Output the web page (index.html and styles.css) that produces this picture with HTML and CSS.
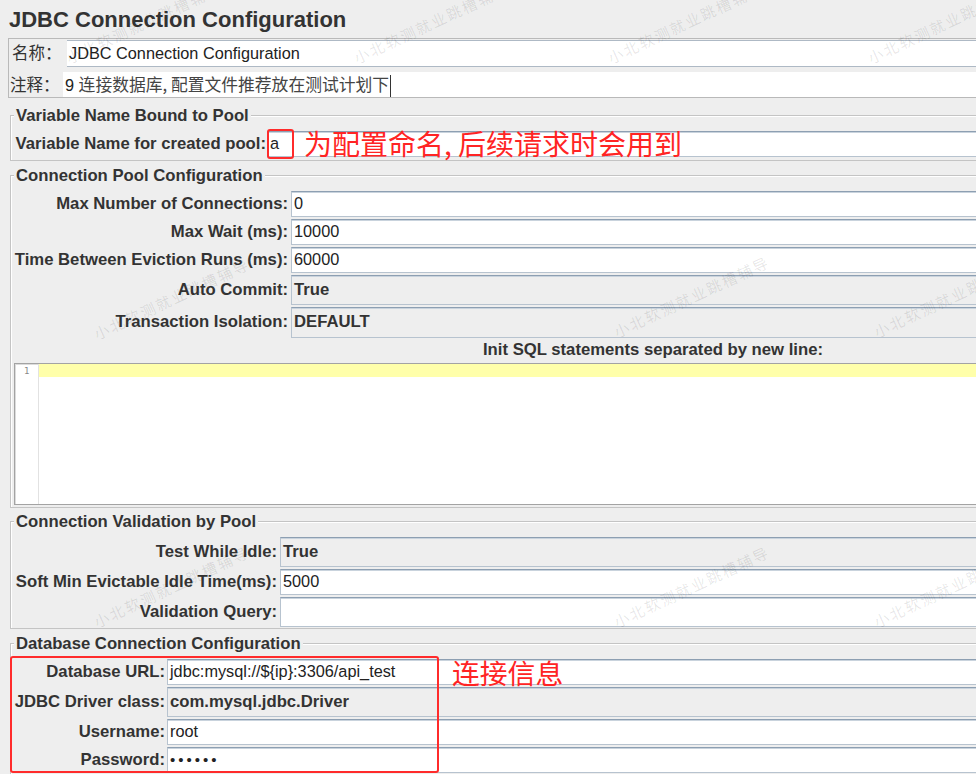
FILE: index.html
```html
<!DOCTYPE html>
<html lang="zh-CN">
<head>
<meta charset="utf-8">
<title>JDBC Connection Configuration</title>
<link rel="stylesheet" href="styles.css">
</head>
<body>
<div class="page">
  <h1 class="title">JDBC Connection Configuration</h1>

  <div class="name-panel">
    <div class="np-row name-row">
      <span class="np-label">名称：</span>
      <div class="np-field name-field">JDBC Connection Configuration</div>
    </div>
    <div class="np-row comment-row">
      <span class="np-label">注释：</span>
      <div class="np-field comment-field"><span class="num">9&nbsp;</span>连接数据库, 配置文件推荐放在测试计划下<span class="caret"></span></div>
    </div>
  </div>

  <section class="group g1">
    <div class="legend">Variable Name Bound to Pool</div>
    <div class="form f1">
      <label class="lbl">Variable Name for created pool:</label>
      <div class="field">a</div>
    </div>
  </section>

  <section class="group g2">
    <div class="legend">Connection Pool Configuration</div>
    <div class="form f2">
      <label class="lbl">Max Number of Connections:</label>
      <div class="field">0</div>
      <label class="lbl">Max Wait (ms):</label>
      <div class="field">10000</div>
      <label class="lbl">Time Between Eviction Runs (ms):</label>
      <div class="field">60000</div>
      <label class="lbl">Auto Commit:</label>
      <div class="field combo">True</div>
      <label class="lbl">Transaction Isolation:</label>
      <div class="field combo tall">DEFAULT</div>
    </div>
    <div class="sql-label">Init SQL statements separated by new line:</div>
    <div class="editor">
      <div class="gutter"><span class="ln">1</span></div>
      <div class="code"><div class="cur-line"></div></div>
    </div>
  </section>

  <section class="group g3">
    <div class="legend">Connection Validation by Pool</div>
    <div class="form f3">
      <label class="lbl">Test While Idle:</label>
      <div class="field combo">True</div>
      <label class="lbl">Soft Min Evictable Idle Time(ms):</label>
      <div class="field">5000</div>
      <label class="lbl">Validation Query:</label>
      <div class="field combo-h"></div>
    </div>
  </section>

  <section class="group g4">
    <div class="legend">Database Connection Configuration</div>
    <div class="form f4">
      <label class="lbl">Database URL:</label>
      <div class="field">jdbc:mysql://${ip}:3306/api_test</div>
      <label class="lbl">JDBC Driver class:</label>
      <div class="field combo">com.mysql.jdbc.Driver</div>
      <label class="lbl">Username:</label>
      <div class="field">root</div>
      <label class="lbl">Password:</label>
      <div class="field pwd">••••••</div>
    </div>
  </section>

  <div class="mark mark-a"></div>
  <div class="note note-a">为配置命名, 后续请求时会用到</div>
  <div class="mark mark-db"></div>
  <div class="note note-db">连接信息</div>

  <div class="wm wm1">小北软测就业跳槽辅导</div>
  <div class="wm wm2">小北软测就业跳槽辅导</div>
  <div class="wm wm3">小北软测就业跳槽辅导</div>
  <div class="wm wm4">小北软测就业跳槽辅导</div>
  <div class="wm wm5">小北软测就业跳槽辅导</div>
  <div class="wm wm6">小北软测就业跳槽辅导</div>
  <div class="wm wm7">小北软测就业跳槽辅导</div>
  <div class="wm wm8">小北软测就业跳槽辅导</div>
  <div class="wm wm9">小北软测就业跳槽辅导</div>
  <div class="wm wm10">小北软测就业跳槽辅导</div>
</div>
</body>
</html>
```

FILE: styles.css
```css
html, body {
  margin: 0;
  padding: 0;
  background: #eeeeee;
  overflow: hidden;
}
body {
  font-family: "Liberation Sans", Arial, "Noto Sans CJK SC", sans-serif;
  color: #333333;
}
.page {
  position: relative;
  width: 1290px;
  height: 774px;
}

/* title */
.title {
  margin: 0;
  box-sizing: border-box;
  height: 38px;
  padding: 7px 0 0 9px;
  font-size: 22px;
  line-height: 25px;
  font-weight: bold;
  color: #333333;
}

/* name / comment panel */
.name-panel {
  margin-left: 8px;
  border: 1px solid #b9b9b9;
  border-right: none;
  padding-top: 1px;
}
.np-row {
  display: flex;
  align-items: stretch;
}
.name-row {
  height: 27px;
  padding-left: 3px;
}
.comment-row {
  height: 25px;
  margin-top: 5px;
  padding-left: 1px;
}
.np-label {
  font-family: "Noto Sans CJK SC", sans-serif;
  font-size: 16.5px;
  line-height: 25px;
  color: #333333;
}
.name-row .np-label { width: 55px; }
.comment-row .np-label { width: 53px; }
.np-field {
  flex: 1;
  background: #ffffff;
  white-space: nowrap;
}
.name-field {
  box-sizing: border-box;
  border-top: 1px solid #aeb9c5;
  border-bottom: 1px solid #aeb9c5;
  padding-left: 2px;
  font-size: 16.3px;
  line-height: 25px;
  color: #222222;
}
.comment-field {
  padding-left: 2px;
  font-family: "Noto Sans CJK SC", sans-serif;
  font-size: 16.8px;
  line-height: 25px;
  color: #444444;
}
.comment-field .num {
  font-family: "Liberation Sans", Arial, sans-serif;
  font-size: 16.3px;
  color: #222222;
}
.caret {
  display: inline-block;
  vertical-align: middle;
  width: 1px;
  height: 22px;
  background: #333333;
  margin-left: 1px;
}

/* groups */
.group {
  margin-left: 10px;
  width: 1278px;
  border: 1px solid #c4c4c4;
  box-shadow: inset 1px 1px 0 #ffffff;
  padding: 0 0 2px 3px;
}
.g1 { margin-top: 17px; padding-bottom: 3px; }
.g2 { margin-top: 14px; }
.g3 { margin-top: 13px; padding-bottom: 1px; }
.g4 { margin-top: 14px; border-bottom: none; padding-bottom: 2px; }

.legend {
  width: fit-content;
  margin-top: -9px;
  padding: 0 2px;
  background: #eeeeee;
  font-size: 16.7px;
  line-height: 18px;
  font-weight: bold;
  color: #333333;
  white-space: nowrap;
}

.form {
  display: grid;
  row-gap: 2px;
  margin-top: 6px;
}
.f1 { grid-template-columns: 253px 1fr; }
.f2 { grid-template-columns: 277px 1fr; }
.f3 { grid-template-columns: 266px 1fr; }
.f4 { grid-template-columns: 153px 1fr; }

.lbl {
  display: flex;
  align-items: center;
  justify-content: flex-end;
  padding-right: 3px;
  padding-bottom: 1px;
  font-size: 16.7px;
  font-weight: bold;
  color: #333333;
  white-space: nowrap;
}
.f1 .lbl { padding-right: 1px; }
.f4 .lbl { padding-right: 2px; }

.field {
  box-sizing: border-box;
  height: 26px;
  background: #ffffff;
  border: 1px solid #b7c3cf;
  border-top: 1px solid #8d9fb2;
  box-shadow: inset 0 1px 0 #c9d3dd;
  padding-left: 2px;
  padding-bottom: 1px;
  display: flex;
  align-items: center;
  font-size: 16.3px;
  color: #222222;
  white-space: nowrap;
}
.field.combo {
  height: 30px;
  background: #eeeeee;
  font-weight: bold;
  font-size: 16.7px;
  color: #333333;
}
.field.combo.tall { height: 31px; }
.field.combo-h { height: 30px; }
.field.pwd {
  font-size: 15px;
  letter-spacing: 3px;
}

.sql-label {
  margin-top: 2px;
  text-align: center;
  font-size: 16.7px;
  line-height: 20px;
  font-weight: bold;
  color: #333333;
}

.editor {
  box-sizing: border-box;
  margin-top: 3px;
  height: 142px;
  display: flex;
  border: 1px solid #a3a3a3;
  box-shadow: inset 1px 1px 0 #dcdcdc;
  background: #ffffff;
}
.gutter {
  width: 23px;
  border-right: 1px solid #e2e2e2;
}
.ln {
  display: block;
  padding: 2px 0 0 9px;
  font-family: "DejaVu Sans Mono", monospace;
  font-size: 9px;
  line-height: 10px;
  color: #888888;
}
.code {
  flex: 1;
}
.cur-line {
  height: 13px;
  background: #ffffaa;
}

/* annotations */
.mark {
  position: absolute;
  box-sizing: border-box;
  border: 2px solid #ff2b2b;
  border-radius: 3px;
}
.mark-a {
  left: 267px;
  top: 129px;
  width: 27px;
  height: 30px;
}
.mark-db {
  left: 10px;
  top: 656px;
  width: 429px;
  height: 117px;
}
.note {
  position: absolute;
  font-family: "Noto Sans CJK SC", sans-serif;
  color: #ff2424;
  white-space: nowrap;
}
.note-a {
  left: 304px;
  top: 126px;
  font-size: 28px;
  line-height: 34px;
}
.note-db {
  left: 452px;
  top: 654px;
  font-size: 27.8px;
  line-height: 36px;
}

/* watermark */
.wm {
  position: absolute;
  font-family: "Noto Sans CJK SC", sans-serif;
  font-size: 15px;
  line-height: 16px;
  letter-spacing: 2px;
  color: rgba(0, 0, 0, 0.1);
  white-space: nowrap;
  transform-origin: 0 100%;
  transform: rotate(-25deg);
  pointer-events: none;
}
.wm1 { left: 70px; top: 50px; }
.wm2 { left: 358px; top: 50px; }
.wm3 { left: 612px; top: 50px; }
.wm4 { left: 872px; top: 50px; }
.wm5 { left: 98px; top: 326px; }
.wm6 { left: 618px; top: 324px; }
.wm7 { left: 878px; top: 324px; }
.wm8 { left: 98px; top: 614px; }
.wm9 { left: 618px; top: 614px; }
.wm10 { left: 878px; top: 614px; }
```
